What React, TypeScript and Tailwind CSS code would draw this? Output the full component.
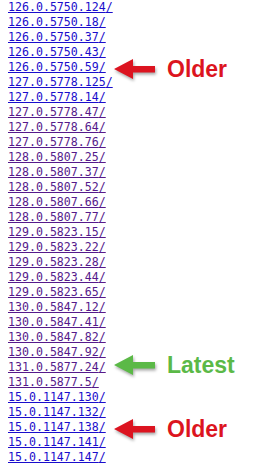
import type { ReactNode } from "react";

const versions: { v: string; visited: boolean; note?: "older" | "latest" }[] = [
  { v: "126.0.5750.124", visited: false },
  { v: "126.0.5750.18", visited: false },
  { v: "126.0.5750.37", visited: false },
  { v: "126.0.5750.43", visited: false },
  { v: "126.0.5750.59", visited: false, note: "older" },
  { v: "127.0.5778.125", visited: false },
  { v: "127.0.5778.14", visited: false },
  { v: "127.0.5778.47", visited: true },
  { v: "127.0.5778.64", visited: true },
  { v: "127.0.5778.76", visited: true },
  { v: "128.0.5807.25", visited: true },
  { v: "128.0.5807.37", visited: true },
  { v: "128.0.5807.52", visited: true },
  { v: "128.0.5807.66", visited: true },
  { v: "128.0.5807.77", visited: true },
  { v: "129.0.5823.15", visited: true },
  { v: "129.0.5823.22", visited: true },
  { v: "129.0.5823.28", visited: true },
  { v: "129.0.5823.44", visited: true },
  { v: "129.0.5823.65", visited: true },
  { v: "130.0.5847.12", visited: true },
  { v: "130.0.5847.41", visited: true },
  { v: "130.0.5847.82", visited: true },
  { v: "130.0.5847.92", visited: true },
  { v: "131.0.5877.24", visited: true, note: "latest" },
  { v: "131.0.5877.5", visited: true },
  { v: "15.0.1147.130", visited: false },
  { v: "15.0.1147.132", visited: false },
  { v: "15.0.1147.138", visited: false, note: "older" },
  { v: "15.0.1147.141", visited: false },
  { v: "15.0.1147.147", visited: false },
];

function Arrow({ color }: { color: string }) {
  return (
    <svg width="44" height="24" viewBox="0 0 44 24" className="drop-shadow-[1px_2px_1.5px_rgba(0,0,0,0.35)]">
      <path d="M1 11 L20 1 L20 8 L42 8 L42 14.5 L20 14.5 L20 21 Z" fill={color} />
    </svg>
  );
}

function Note({ kind }: { kind: "older" | "latest" }): ReactNode {
  const color = kind === "older" ? "#dc1420" : "#5bb947";
  return (
    <div
      className="absolute left-[105px] top-1/2 -translate-y-1/2 flex items-center gap-[10px] pointer-events-none"
      style={{ marginTop: kind === "latest" ? -2 : 2 }}
    >
      <Arrow color={color} />
      <span
        className="text-[23px] font-bold leading-none"
        style={{ color, fontFamily: '"Liberation Sans", Arial, sans-serif' }}
      >
        {kind === "older" ? "Older" : "Latest"}
      </span>
    </div>
  );
}

export default function App() {
  return (
    <div className="w-[271px] h-[467px] overflow-hidden bg-white">
      <ul className="pl-2" style={{ fontFamily: '"DejaVu Sans Mono", monospace' }}>
        {versions.map((row) => (
          <li key={row.v} className="relative h-[15px] text-[11.6px] leading-[15px]">
            <a
              href="#"
              className={`underline ${row.visited ? "text-[#551a8b]" : "text-[#1a0dcc]"}`}
            >
              {row.v}/
            </a>
            {row.note && <Note kind={row.note} />}
          </li>
        ))}
      </ul>
    </div>
  );
}
